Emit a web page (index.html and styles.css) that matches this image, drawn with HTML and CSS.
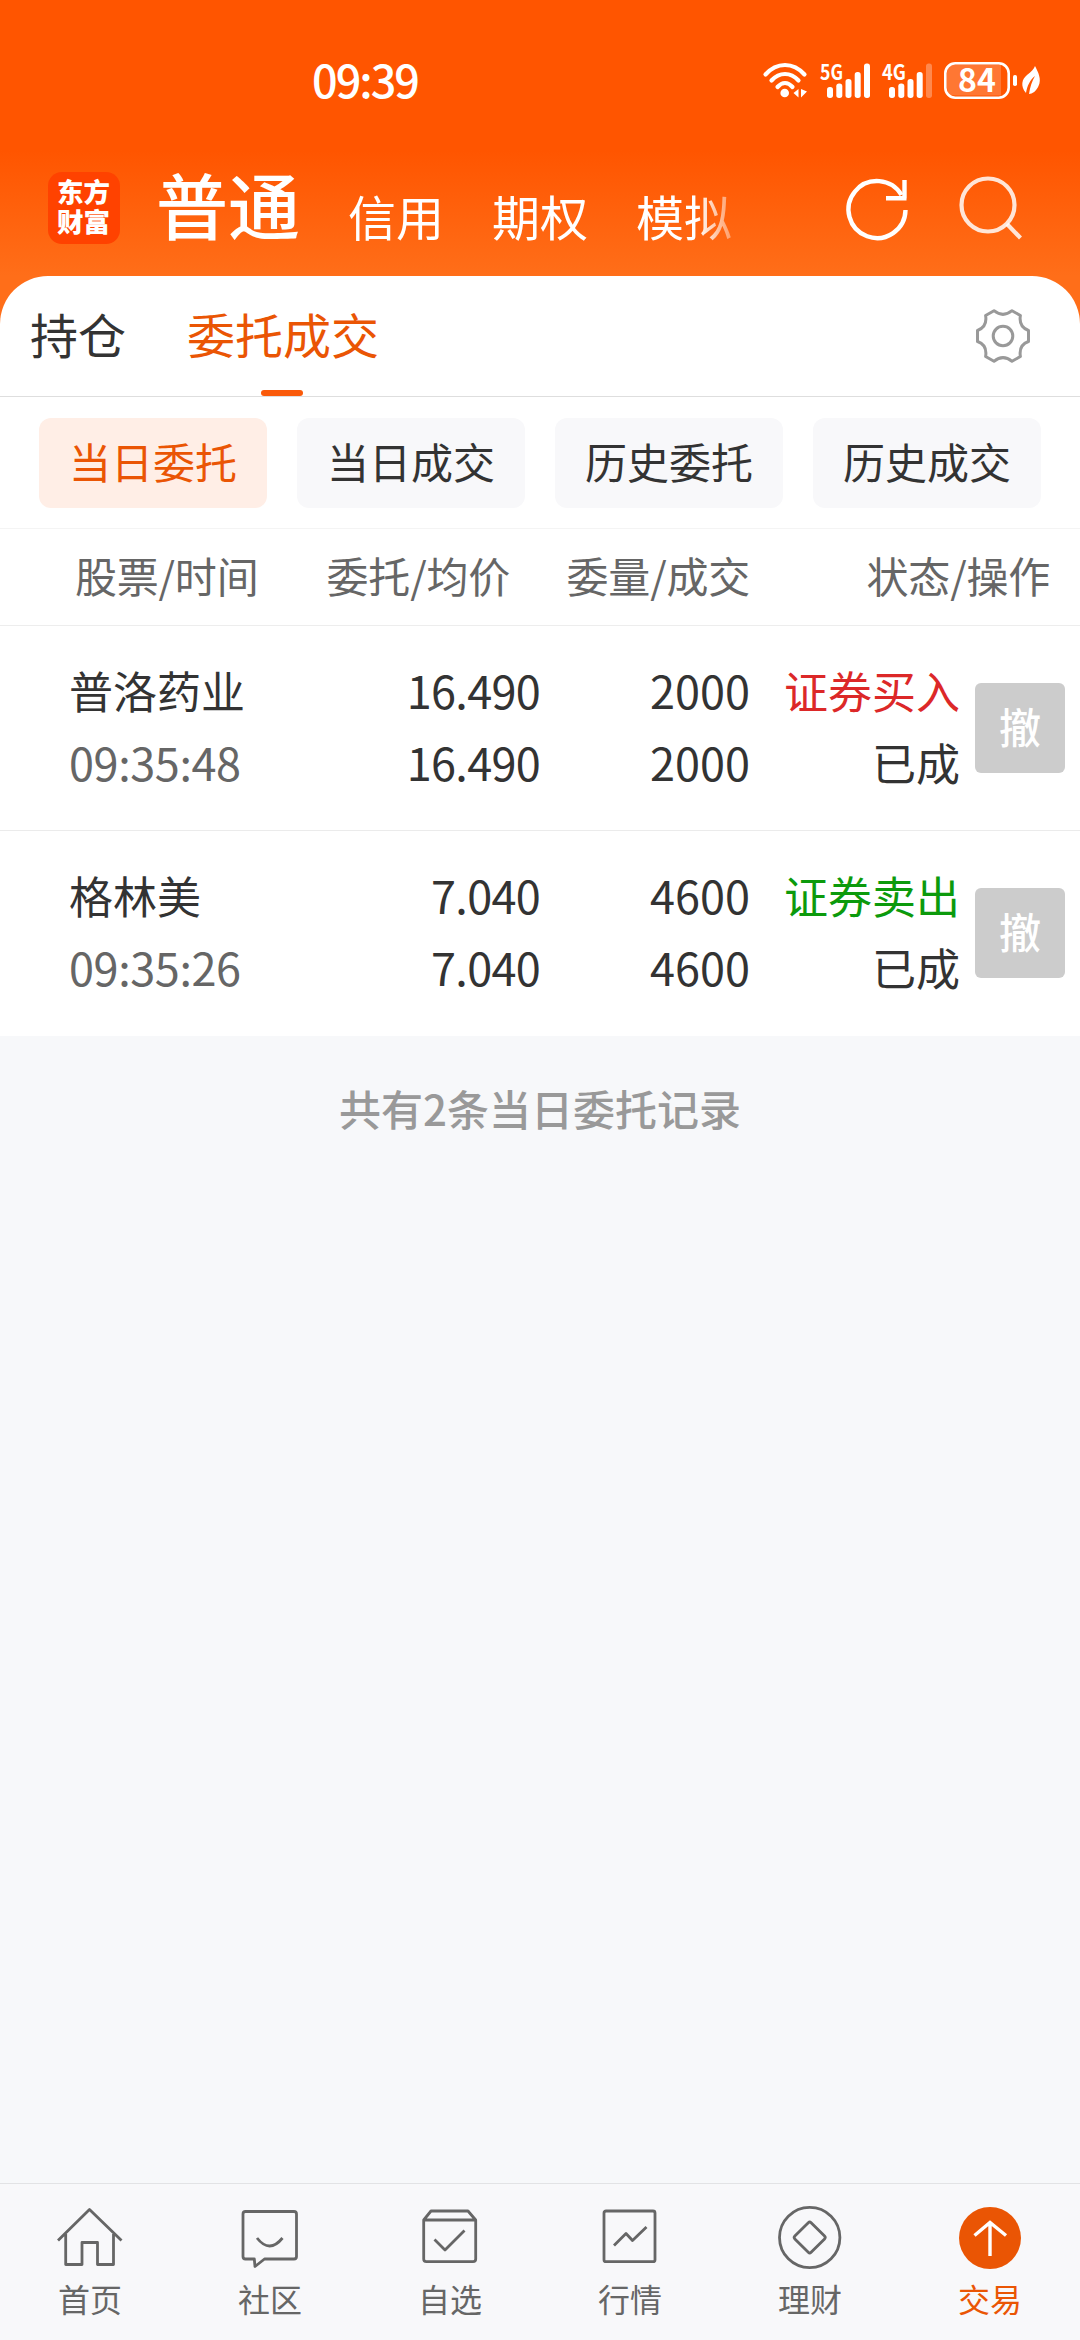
FILE: index.html
```html
<!DOCTYPE html>
<html lang="zh-CN">
<head>
<meta charset="utf-8">
<title>委托成交</title>
<link rel="stylesheet" href="styles.css">
</head>
<body>
<div class="app">
  <header class="top">
    <div class="status">
      <span class="clock">09:39</span>
      <div class="status-icons">
        <svg class="wifi" width="46" height="38" viewBox="0 0 46 38" fill="none" stroke="#fff" stroke-width="4.2" stroke-linecap="round">
          <path d="M2.5 13.5Q11 4 22 4t19.500 9.500"/><path d="M8.500 19.500Q14.500 13 22 13t13.500 6.500"/><path d="M14.500 26Q18 22 22 22t7.500 4"/>
          <circle cx="21.700" cy="32" r="4.300" fill="#fff" stroke="none"/>
          <path d="M35.500 28v8.500l-5-4.500zM38 28v8.500l6-6z" fill="#fff" stroke="none"/>
        </svg>
        <svg class="signal" width="51" height="38" viewBox="0 0 51 38" fill="#fff">
          <text x="1" y="19" class="net" textLength="23" lengthAdjust="spacingAndGlyphs">5G</text>
          <rect x="8" y="26" width="6" height="11" rx="2.700"/><rect x="17.300" y="22.500" width="6" height="14.500" rx="2.700"/><rect x="26.500" y="18" width="6" height="19" rx="2.700"/><rect x="35.700" y="11" width="6" height="26" rx="2.700"/><rect x="45" y="2.500" width="6" height="34.500" rx="2.700"/>
        </svg>
        <svg class="signal" width="51" height="38" viewBox="0 0 51 38" fill="#fff">
          <text x="1" y="19" class="net" textLength="24" lengthAdjust="spacingAndGlyphs">4G</text>
          <rect x="8" y="26" width="6" height="11" rx="2.700"/><rect x="17.300" y="22.500" width="6" height="14.500" rx="2.700"/><rect x="26.500" y="18" width="6" height="19" rx="2.700"/><rect x="35.700" y="11" width="6" height="26" rx="2.700"/><rect x="45" y="2.500" width="6" height="34.500" rx="2.700" opacity=".3"/>
        </svg>
        <svg class="battery" width="74" height="38" viewBox="0 0 74 38" fill="#fff">
          <path d="M11 3.500H57V34.500H11Q3 34.500 3 26.500V11.500Q3 3.500 11 3.500z" opacity=".2"/>
          <rect x="1.300" y="2.300" width="63.400" height="34.400" rx="10" fill="none" stroke="#fff" stroke-width="2.600"/>
          <rect x="69" y="14" width="4" height="11" rx="1.800"/>
          <text x="33" y="31" class="level" text-anchor="middle">84</text>
        </svg>
        <svg class="leaf" width="20" height="30" viewBox="0 0 20 30">
          <path d="M13 1C16 7 20 14 16.500 21C14.500 26 10 29 7 29C8 22 10 16 13 11C8 15 5 21 4 28C-2 21 0 14 5 10C9 7 12 4 13 1z" fill="#fff"/>
        </svg>
      </div>
    </div>
    <div class="bar">
      <div class="logo">东方财富</div>
      <nav class="accounts"><span class="account-on">普通</span><span>信用</span><span>期权</span><span>模拟</span></nav>
      <svg class="refresh" width="66" height="68" viewBox="0 0 66 68" fill="none" stroke="#fff" stroke-width="4.400">
        <path d="M61.500 35A28.500 28.500 0 1 1 57.500 20"/><path d="M60.500 5V23.500M42 23.300H62.500"/>
      </svg>
      <svg class="search" width="66" height="68" viewBox="0 0 66 68" fill="none" stroke="#fff" stroke-opacity=".84" stroke-width="4.200">
        <circle cx="30" cy="30" r="26.500"/><path d="M49 49L62.500 63"/>
      </svg>
    </div>
  </header>

  <main class="panel">
    <div class="tabs">
      <span class="tab">持仓</span>
      <span class="tab tab-on">委托成交</span>
      <svg class="gear" width="56" height="56" viewBox="-28 -28 56 56" fill="none" stroke="#999" stroke-width="3" stroke-linejoin="round">
        <path d="M-17.400 -20.500L-9 -25.300Q0 -18 9 -25.300L17.400 -20.500Q15.500 -9 25.500 -5.500V5.500Q15.500 9 17.400 20.500L9 25.300Q0 18 -9 25.300L-17.400 20.500Q-15.500 9 -25.500 5.500V-5.500Q-15.500 -9 -17.400 -20.500z"/>
        <circle r="9.800"/>
      </svg>
    </div>
    <div class="chips">
      <span class="chip chip-on">当日委托</span><span class="chip">当日成交</span><span class="chip">历史委托</span><span class="chip">历史成交</span>
    </div>
    <div class="head"><span>股票/时间</span><span>委托/均价</span><span>委量/成交</span><span>状态/操作</span></div>
    <div class="order">
      <div class="stock"><span>普洛药业</span><span class="num time">09:35:48</span></div>
      <div class="cell num price"><span>16.490</span><span>16.490</span></div>
      <div class="cell num"><span>2000</span><span>2000</span></div>
      <div class="cell"><span class="buy">证券买入</span><span>已成</span></div>
      <span class="cancel">撤</span>
    </div>
    <div class="order">
      <div class="stock"><span>格林美</span><span class="num time">09:35:26</span></div>
      <div class="cell num price"><span>7.040</span><span>7.040</span></div>
      <div class="cell num"><span>4600</span><span>4600</span></div>
      <div class="cell"><span class="sell">证券卖出</span><span>已成</span></div>
      <span class="cancel">撤</span>
    </div>
  </main>
  <p class="note">共有2条当日委托记录</p>

  <footer class="nav">
    <div class="item"><svg class="icon" viewBox="0 0 72 72"><path d="M4 38.500L35.500 7.500L67.500 38.500M11.700 32V62.500H28V40.500H43.500V62.500H59.500V32"/></svg><span>首页</span></div>
    <div class="item"><svg class="icon" viewBox="0 0 72 72"><path d="M11.500 9.500H60Q62.500 9.500 62.500 12V54.500Q62.500 57 60 57H30.500L21 64.500L20.300 57H11.500Q9 57 9 54.500V12Q9 9.500 11.500 9.500M23 36Q35.500 52 48.500 36"/></svg><span>社区</span></div>
    <div class="item"><svg class="icon" viewBox="0 0 72 72"><path d="M9.700 18L17 9H54L61.700 18V57Q61.700 59.700 59 59.700H12.400Q9.700 59.700 9.700 57zM9.700 18H61.700M20.500 37.500L31 48L50.500 28.500"/></svg><span>自选</span></div>
    <div class="item"><svg class="icon" viewBox="0 0 72 72"><rect x="10" y="9" width="51" height="50.700" rx="2"/><path d="M20 43.500L32 31.500L38.500 38.500L52.500 25"/></svg><span>行情</span></div>
    <div class="item"><svg class="icon" viewBox="0 0 72 72"><circle cx="35.700" cy="35.500" r="30.200"/><rect x="24.200" y="24" width="23" height="23" rx="2" transform="rotate(45 35.700 35.500)"/></svg><span>理财</span></div>
    <div class="item item-on"><svg class="icon" viewBox="0 0 72 72"><circle cx="36" cy="36" r="31" class="disc"/><path d="M36 54V21M20.500 33.500L36 20.500L52 33.500" class="arrow"/></svg><span>交易</span></div>
  </footer>
</div>
</body>
</html>
```
FILE: styles.css
```css
* { box-sizing: border-box; }
body {
  margin: 0;
  font-family: "Noto Sans CJK SC", sans-serif;
  color: #333;
  background: #f7f8fa;
}
svg { display: block; flex: none; overflow: visible; }
.app {
  width: 1080px;
  height: 2340px;
  display: flex;
  flex-direction: column;
  background: #f7f8fa;
}

/* Orange header */
.top {
  height: 326px;
  flex: none;
  background: linear-gradient(#ff5500 0, #ff5500 150px, #ff6e19 276px);
  color: #fff;
}
.status {
  height: 160px;
  padding: 0 38px 0 312px;
  display: flex;
  justify-content: space-between;
}
.clock {
  font-size: 45px;
  font-weight: 500;
  letter-spacing: -2px;
  line-height: 60px;
  padding-top: 49px;
}
.status-icons {
  display: flex;
  align-items: flex-start;
  padding-top: 61px;
}
.signal { margin-left: 10px; }
.signal + .signal { margin-left: 11px; }
.battery { margin-left: 12px; }
.leaf { margin: 4px 0 0 4px; }
.net { font-size: 21px; font-weight: 700; }
.level { font-size: 32px; font-weight: 700; }
.bar {
  height: 116px;
  padding: 0 30px 0 48px;
  display: flex;
  align-items: flex-start;
}
.logo {
  width: 72px;
  height: 72px;
  margin: 12px 37px 0 0;
  padding: 4px 8px 0 9px;
  border-radius: 14px;
  background: #ff4200;
  font-size: 26.5px;
  font-weight: 900;
  line-height: 30px;
}
.accounts {
  width: 582px;
  display: flex;
  align-items: flex-start;
  gap: 48px;
  font-size: 48px;
  line-height: 72px;
  padding-top: 19px;
  -webkit-mask-image: linear-gradient(90deg, #000 540px, transparent 594px);
  mask-image: linear-gradient(90deg, #000 540px, transparent 594px);
}
.account-on { font-size: 72px; font-weight: 500; margin: -12px 0 0 -1px; }
.refresh { margin: 15px 0 0 105px; }
.search { margin: 15px 0 0 48px; }

/* White sheet */
.panel {
  margin-top: -50px;
  flex: none;
  background: #fff;
  border-radius: 48px 48px 0 0;
}
.tabs {
  height: 121px;
  padding: 0 49px 0 30px;
  border-bottom: 1px solid #dedede;
  display: flex;
  gap: 61px;
  font-size: 48px;
  line-height: 114px;
}
.tab-on {
  color: #ea5504;
  position: relative;
}
.tab-on::after {
  content: "";
  position: absolute;
  left: 74px;
  bottom: 0;
  width: 42px;
  height: 6px;
  border-radius: 3px;
  background: #fa5a0a;
}
.gear { margin: 32px 0 0 auto; }
.chips {
  height: 132px;
  padding: 21px 39px 0;
  border-bottom: 1px solid #f4f4f4;
  display: flex;
  gap: 30px;
}
.chip {
  width: 228px;
  height: 90px;
  border-radius: 12px;
  background: #f8f8fa;
  text-align: center;
  font-size: 42px;
  line-height: 86px;
}
.chip-on { background: #ffeee6; color: #ea5504; }
.head {
  height: 97px;
  padding: 0 30px 0 75px;
  border-bottom: 1px solid #ededed;
  display: grid;
  grid-template-columns: 195px 240px 240px 1fr;
  column-gap: 0;
  text-align: right;
  font-size: 42px;
  letter-spacing: -.2px;
  margin-right: 0;
  line-height: 92px;
  color: #666;
}
.head span:nth-child(2), .head span:nth-child(3) { margin-right: -240px; padding-right: 240px; }
.head span { white-space: nowrap; }
.head span:first-child { text-align: left; }
.head span:nth-child(n+2) { margin: 0; padding: 0; }
.order {
  height: 205px;
  padding: 28px 15px 0 69px;
  display: grid;
  grid-template-columns: 231px 240px 210px 210px 90px;
  font-size: 44px;
  line-height: 72px;
}
.order + .order { box-shadow: 0 -1px #ebebeb; }
.stock, .cell { display: flex; flex-direction: column; }
.cell { align-items: flex-end; }
.num { font-size: 45px; }
.price { letter-spacing: -.7px; }
.time { color: #666; letter-spacing: -.4px; }
.buy { color: #dc2828; }
.sell { color: #0c9a0c; }
.cancel {
  height: 90px;
  margin: 29px 0 0 15px;
  width: 90px;
  border-radius: 6px;
  background: #ccc;
  color: #fff;
  font-size: 42px;
  font-weight: 500;
  line-height: 86px;
  text-align: center;
}
.note {
  margin: 41px 0 0;
  flex: 1;
  text-align: center;
  font-size: 42px;
  line-height: 62px;
  font-weight: 500;
  color: #999;
}

/* Bottom navigation */
.nav {
  height: 157px;
  flex: none;
  border-top: 1px solid #e2e3e5;
  background: #f8f8fa;
  display: grid;
  grid-template-columns: repeat(6, 180px);
}
.item {
  display: flex;
  flex-direction: column;
  align-items: center;
  padding-top: 18px;
  font-size: 32px;
  line-height: 48px;
  color: #666;
}
.item-on { color: #ea5504; }
.icon {
  width: 72px;
  height: 72px;
  fill: none;
  stroke: #666;
  stroke-width: 2.8;
  stroke-linejoin: round;
}
.disc { fill: #ea5504; stroke: none; }
.arrow { stroke: #fff; stroke-width: 3.4; stroke-linejoin: miter; }
```
